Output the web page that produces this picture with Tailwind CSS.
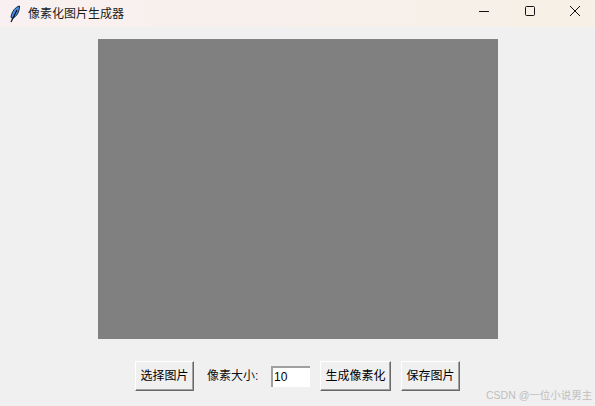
<!DOCTYPE html>
<html lang="zh-CN">
<head>
<meta charset="utf-8">
<script src="https://cdn.jsdelivr.net/npm/@tailwindcss/browser@4"></script>
</head>
<body class="relative w-[595px] h-[406px] overflow-hidden bg-[#f0f0f0] font-['Liberation_Sans','Noto_Sans_CJK_SC',sans-serif] text-black">
  <header class="flex items-center h-[27px] bg-gradient-to-r from-[#f9f0f1] to-[#f7f0e6]">
    <svg class="ml-[8px] w-[14px] h-[18px]" viewBox="0 0 14 18">
      <path d="M11.5 1C7.5 2 4 6 3 12L4 13.5C8.5 12 11.5 7 11.5 1Z" fill="#4a8fe6" stroke="#10243f" stroke-width="1"/>
      <path d="M9 5L3 17" stroke="#0c1420" stroke-width="1.2" fill="none"/>
    </svg>
    <span class="ml-[6px] text-[12px] leading-none text-[#1a1a1a]">像素化图片生成器</span>
    <div class="ml-auto flex items-center">
      <svg class="w-[46px] h-[27px]" viewBox="0 0 46 27"><path d="M18 11.5H28" stroke="#111" stroke-width="1"/></svg>
      <svg class="w-[46px] h-[27px]" viewBox="0 0 46 27"><rect x="18.5" y="6.5" width="9" height="9" rx="1" fill="none" stroke="#111" stroke-width="1"/></svg>
      <svg class="w-[42px] h-[27px]" viewBox="0 0 42 27"><path d="M17 6L27 16M27 6L17 16" stroke="#111" stroke-width="1" fill="none"/></svg>
    </div>
  </header>
  <main class="flex flex-col pt-[12px]">
    <div class="ml-[98px] w-[400px] h-[300px] bg-[#808080]"></div>
    <div class="mt-[22px] ml-[135px] flex items-center">
      <button class="w-[59px] h-[30px] text-[12px] bg-[#f0f0f0] border border-t-white border-l-white border-r-[#696969] border-b-[#696969] shadow-[inset_-1px_-1px_0_#a0a0a0]">选择图片</button>
      <span class="ml-[13px] w-[51px] whitespace-nowrap text-[12px] text-[#111]">像素大小:</span>
      <input value="10" class="ml-[13px] w-[39px] h-[21px] pl-[1px] text-[12px] bg-white border-t-2 border-l-2 border-t-[#a0a0a0] border-l-[#a0a0a0] outline-none">
      <button class="ml-[10px] w-[71px] h-[30px] text-[12px] bg-[#f0f0f0] border border-t-white border-l-white border-r-[#696969] border-b-[#696969] shadow-[inset_-1px_-1px_0_#a0a0a0]">生成像素化</button>
      <button class="ml-[10px] w-[59px] h-[30px] text-[12px] bg-[#f0f0f0] border border-t-white border-l-white border-r-[#696969] border-b-[#696969] shadow-[inset_-1px_-1px_0_#a0a0a0]">保存图片</button>
    </div>
  </main>
  <div class="absolute left-[486px] top-[388px] text-[10.5px] leading-[14px] text-[#bfbfbf] whitespace-nowrap">CSDN @一位小说男主</div>
</body>
</html>
